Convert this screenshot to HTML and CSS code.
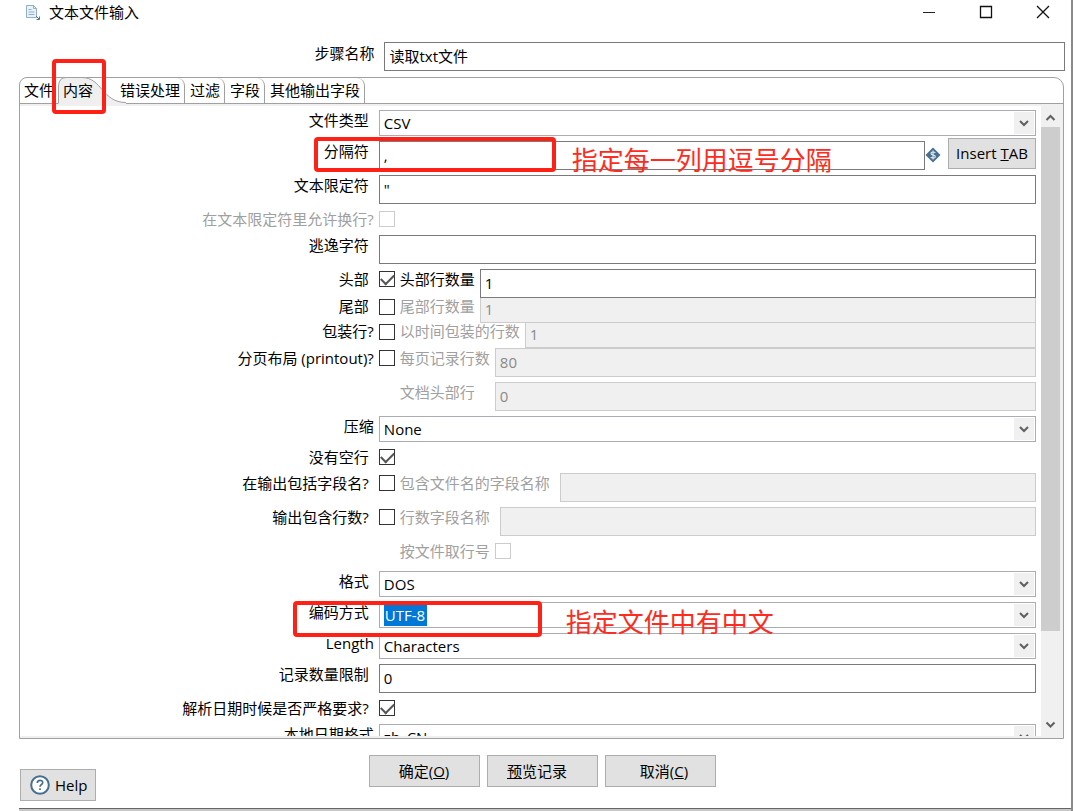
FILE: index.html
```html
<!DOCTYPE html>
<html lang="zh-CN">
    <head>
        <meta charset="utf-8"/>
        <title>文本文件输入</title>
        <link rel="stylesheet" href="styles.css">
    </head>

    <body>
        <div class="dialog">
            <header class="titlebar">
                <svg class="title-icon" width="16" height="17" viewBox="0 0 16 17" fill="none">
                    <path d="M1.500 1.500h7l3 3v9h-10z" fill="#eaf2f8" stroke="#8fb0c8"/>
                    <path d="M8.500 1.500v3h3M3.500 5.500h3M3.500 8h6M3.500 10.500h6" stroke="#8fb0c8"/>
                    <path d="M11 12l3 3M14.500 12.500v3h-3" stroke="#4a7595"/>
                </svg>
                <h1>文本文件输入</h1>
                <button class="win-btn" aria-label="最小化"><svg width="14" height="14" viewBox="0 0 14 14"><path d="M1 7.500h12" stroke="#222" fill="none"/></svg></button>
                <button class="win-btn" aria-label="最大化"><svg width="14" height="14" viewBox="0 0 14 14"><path d="M1.500 1.500h11v11h-11z" stroke="#111" stroke-width="1.300" fill="none"/></svg></button>
                <button class="win-btn" aria-label="关闭"><svg width="14" height="14" viewBox="0 0 14 14"><path d="M1 1l12 12M13 1L1 13" stroke="#111" stroke-width="1.300" fill="none"/></svg></button>
            </header>

            <div class="step">
                <label for="stepName">步骤名称</label>
                <input type="text" id="stepName" class="text" value="读取txt文件">
            </div>

            <main class="panel">
                <nav class="tabs">
                    <button class="tab tab-first">文件</button>
                    <button class="tab tab-active">
                        <svg width="68" height="27" viewBox="0 0 68 27"><path d="M.5 27V9Q1 .5 8 .5H24C44 .5 44 25.500 68 25.500V27z" fill="#efefef"/><path d="M.5 26V9Q1 .5 8 .5H24C44 .5 44 25.500 68 25.500" fill="none" stroke="#a0a0a0"/></svg>
                        <span>内容</span>
                        <i class="mark mark-tab"></i>
                    </button>
                    <button class="tab">错误处理</button>
                    <button class="tab">过滤</button>
                    <button class="tab">字段</button>
                    <button class="tab">其他输出字段</button>
                </nav>

                <div class="content">
                    <form class="form">
                        <div class="row">
                            <label class="name" for="fileType">文件类型</label>
                            <div class="field">
                                <div class="combo"><select id="fileType"><option>CSV</option></select><svg class="arrow" viewBox="0 0 20 22"><path d="M6 9l4 4 4-4" /></svg></div>
                            </div>
                        </div>
                        <div class="row">
                            <label class="name" for="separator">分隔符</label>
                            <div class="field">
                                <input type="text" id="separator" class="text" value=",">
                                <svg class="var-icon" width="16" height="16" viewBox="0 0 16 16"><path d="M8 0.500L15.500 8 8 15.500.5 8z" fill="#47708f"/><path d="M10.300 5.800C9.500 4.700 6 4.600 6 6.500c0 1.800 4.300 1.100 4.300 3.100 0 1.900-3.600 1.900-4.600.6M8 3.500v9" fill="none" stroke="#dce8f0" stroke-width="1.200"/></svg>
                                <button type="button" class="btn btn-tab">Insert <u>T</u>AB</button>
                                <i class="mark mark-sep"></i>
                                <span class="note note-sep">指定每一列用逗号分隔</span>
                            </div>
                        </div>
                        <div class="row">
                            <label class="name" for="enclosure">文本限定符</label>
                            <div class="field"><input type="text" id="enclosure" class="text" value="&quot;"></div>
                        </div>
                        <div class="row row-check">
                            <label class="name wide off" for="breaks">在文本限定符里允许换行?</label>
                            <div class="field"><input type="checkbox" id="breaks" disabled></div>
                        </div>
                        <div class="row">
                            <label class="name" for="escape">逃逸字符</label>
                            <div class="field"><input type="text" id="escape" class="text"></div>
                        </div>

                        <div class="group">
                            <div class="row">
                                <label class="name" for="header">头部</label>
                                <div class="field">
                                    <input type="checkbox" id="header" checked>
                                    <label class="sub" for="headerNum">头部行数量</label>
                                    <input type="text" id="headerNum" class="text" value="1">
                                </div>
                            </div>
                            <div class="row row-tight">
                                <label class="name" for="footer">尾部</label>
                                <div class="field">
                                    <input type="checkbox" id="footer">
                                    <label class="sub off" for="footerNum">尾部行数量</label>
                                    <input type="text" id="footerNum" class="text" value="1" disabled>
                                </div>
                            </div>
                            <div class="row row-tight">
                                <label class="name wide" for="wrap">包装行?</label>
                                <div class="field">
                                    <input type="checkbox" id="wrap">
                                    <label class="sub off" for="wrapNum">以时间包装的行数</label>
                                    <input type="text" id="wrapNum" class="text" value="1" disabled>
                                </div>
                            </div>
                            <div class="row">
                                <label class="name wide" for="paged">分页布局 (printout)?</label>
                                <div class="field">
                                    <input type="checkbox" id="paged">
                                    <label class="sub off" for="pageNum">每页记录行数</label>
                                    <input type="text" id="pageNum" class="text" value="80" disabled>
                                </div>
                            </div>
                        </div>

                        <div class="row">
                            <span class="name"></span>
                            <div class="field">
                                <label class="sub sub-doc off" for="docHeader">文档头部行</label>
                                <input type="text" id="docHeader" class="text" value="0" disabled>
                            </div>
                        </div>
                        <div class="row">
                            <label class="name wide" for="zip">压缩</label>
                            <div class="field">
                                <div class="combo"><select id="zip"><option>None</option></select><svg class="arrow" viewBox="0 0 20 22"><path d="M6 9l4 4 4-4" /></svg></div>
                            </div>
                        </div>
                        <div class="row row-check">
                            <label class="name" for="noEmpty">没有空行</label>
                            <div class="field"><input type="checkbox" id="noEmpty" checked></div>
                        </div>
                        <div class="row">
                            <label class="name" for="inclName">在输出包括字段名?</label>
                            <div class="field">
                                <input type="checkbox" id="inclName">
                                <label class="sub sub-far off" for="nameField">包含文件名的字段名称</label>
                                <input type="text" id="nameField" class="text" disabled>
                            </div>
                        </div>
                        <div class="row">
                            <label class="name" for="inclRow">输出包含行数?</label>
                            <div class="field">
                                <input type="checkbox" id="inclRow">
                                <label class="sub sub-far off" for="rowField">行数字段名称</label>
                                <input type="text" id="rowField" class="text" disabled>
                            </div>
                        </div>
                        <div class="row row-check row-last">
                            <span class="name"></span>
                            <div class="field">
                                <label class="sub sub-line off" for="byFile">按文件取行号</label>
                                <input type="checkbox" id="byFile" disabled>
                            </div>
                        </div>
                        <div class="row">
                            <label class="name" for="format">格式</label>
                            <div class="field">
                                <div class="combo"><select id="format"><option>DOS</option></select><svg class="arrow" viewBox="0 0 20 22"><path d="M6 9l4 4 4-4" /></svg></div>
                            </div>
                        </div>
                        <div class="row">
                            <label class="name" for="encoding">编码方式</label>
                            <div class="field">
                                <div class="combo combo-selected"><select id="encoding"><option>UTF-8</option></select><svg class="arrow" viewBox="0 0 20 22"><path d="M6 9l4 4 4-4" /></svg></div>
                                <i class="mark mark-enc"></i>
                                <span class="note note-enc">指定文件中有中文</span>
                            </div>
                        </div>
                        <div class="row">
                            <label class="name wide" for="length">Length</label>
                            <div class="field">
                                <div class="combo"><select id="length"><option>Characters</option></select><svg class="arrow" viewBox="0 0 20 22"><path d="M6 9l4 4 4-4" /></svg></div>
                            </div>
                        </div>
                        <div class="row">
                            <label class="name" for="limit">记录数量限制</label>
                            <div class="field"><input type="text" id="limit" class="text" value="0"></div>
                        </div>
                        <div class="row row-check">
                            <label class="name" for="lenient">解析日期时候是否严格要求?</label>
                            <div class="field"><input type="checkbox" id="lenient" checked></div>
                        </div>
                        <div class="row">
                            <label class="name wide" for="locale">本地日期格式</label>
                            <div class="field">
                                <div class="combo"><select id="locale"><option>zh_CN</option></select><svg class="arrow" viewBox="0 0 20 22"><path d="M6 9l4 4 4-4" /></svg></div>
                            </div>
                        </div>
                    </form>

                    <div class="scrollbar">
                        <svg class="scroll-arrow" viewBox="0 0 19 21"><path d="M5.500 14l4-4 4 4"/></svg>
                        <div class="thumb"></div>
                        <div class="track"></div>
                        <svg class="scroll-arrow" viewBox="0 0 19 21"><path d="M5.500 7.500l4 4 4-4"/></svg>
                    </div>
                </div>
            </main>

            <footer class="buttons">
                <button class="btn btn-help">
                    <svg width="20" height="20" viewBox="0 0 20 20" fill="none"><circle cx="10" cy="10" r="8.800" fill="#fff" stroke="#47708f" stroke-width="2"/><path d="M7.300 8C7.300 4.400 12.800 4.500 12.700 7.700 12.600 9.500 10 9.500 10 11.700M10 13.200v1.800" stroke="#47708f" stroke-width="1.700"/></svg>
                    Help
                </button>
                <div class="actions">
                    <button class="btn">确定(<u>O</u>)</button>
                    <button class="btn btn-preview"><u>预</u>览记录</button>
                    <button class="btn btn-cancel">取消(<u>C</u>)</button>
                </div>
            </footer>
            <div class="bottom-edge"></div>
        </div>
    </body>
</html>
```
FILE: styles.css
```css
* { box-sizing: border-box; }
body {
    margin: 0; background: #fff; color: #000;
    font: 15px/22px "Open Sans", "Noto Sans CJK SC", sans-serif;
}
button, input, select { font: inherit; color: inherit; margin: 0; }
button { padding: 0; border: 0; background: none; }

.dialog {
    display: flex; flex-direction: column;
    height: 100vh; border-right: 2px solid #8a8a8a;
}

/* 标题栏 */
.titlebar { display: flex; align-items: center; height: 24px; padding-left: 25px; }
.titlebar h1 { flex: 1; margin: 0 0 0 8px; font-size: 15px; font-weight: normal; }
.win-btn { display: flex; align-items: center; justify-content: center; width: 57px; height: 24px; }

.step { display: flex; margin: 18px 6px 6px 18px; }
.step label { width: 35%; padding-right: 10px; text-align: right; }

.text {
    flex: 1; min-width: 0; height: 29px; padding: 0 4px 2px;
    border: 1px solid #7a7a7a; border-radius: 0; background: #fff;
}
.text:disabled { border-color: #ccc; background: #f0f0f0; color: #8a8a8a; }

/* 选项卡 */
.panel {
    flex: 1; min-height: 0; margin: 0 7px 0 19px;
    display: flex; flex-direction: column;
    border: 1px solid #a0a0a0; border-radius: 8px 10px 0 0;
}
.tabs { display: flex; height: 26px; border-bottom: 1px solid #a0a0a0; }
.tab {
    padding: 0 4px 0 5px; height: 25px; line-height: 25px;
    border-right: 1px solid #a0a0a0; border-top-right-radius: 8px;
}
.tab-first { padding-left: 4px; border-right: 0; }
.tab-active { position: relative; width: 57px; padding: 0; border: 0; text-align: left; }
.tab-active svg { position: absolute; left: 0; top: -1px; }
.tab-active span { position: relative; padding-left: 5px; }

.content { flex: 1; min-height: 0; display: flex; padding: 2px 3px 2px 0; background: #f0f0f0; }
.form {
    flex: 1; overflow: hidden; padding: 4px 5px 0; background: #fff;
    display: flex; flex-direction: column; gap: 5px;
}
.row { display: flex; flex-shrink: 0; }
.name { width: 35%; flex-shrink: 0; padding-right: 10px; line-height: 20px; text-align: right; white-space: nowrap; }
.wide { padding-right: 5px; }
.off { color: #a0a0a0; }
.field { position: relative; flex: 1; min-width: 0; display: flex; align-items: flex-start; }
.sub { padding: 0 5px; line-height: 20px; white-space: nowrap; }
.sub-far { padding-right: 10px; }
.sub-doc { padding-left: 21px; padding-right: 20px; }
.sub-line { padding-left: 21px; }
.row-check { min-height: 21px; }
.row-last { margin-bottom: 4px; }
.row-tight .name, .row-tight .sub { line-height: 17px; }
.row-tight .text { height: 25px; border-top: 0; }
.row-tight input[type=checkbox] { margin-top: 1px; }

input[type=checkbox] {
    appearance: none; width: 16px; height: 16px; margin-top: 2px; flex-shrink: 0;
    border: 1px solid #333; background: #fff;
}
input[type=checkbox]:disabled { border-color: #ccc; }
input[type=checkbox]:checked::after {
    content: ""; display: block; width: 11px; height: 6px; margin: 2px 0 0 1px;
    border-left: 2px solid #555; border-bottom: 2px solid #555;
    transform: rotate(-45deg);
}

.combo { flex: 1; display: flex; height: 26px; padding: 1px; border: 1px solid #acacb4; background: #fff; }
.combo select { flex: 1; padding: 0 3px; border: 0; border-radius: 0; appearance: none; background: #fff; }
.combo-selected { justify-content: space-between; padding-left: 4px; }
.combo-selected select { flex: none; height: 22px; padding: 0 1px; background: #0078d7; color: #fff; }
.arrow { width: 20px; height: 22px; background: #f0f0f0; }
.arrow path, .scroll-arrow path { fill: none; stroke: #606060; stroke-width: 2; }
.var-icon { margin-top: 6px; }

.btn { border: 1px solid #adadad; background: #e1e1e1; height: 32px; }
.btn-tab { width: 88px; height: 31px; margin: -3px 0 0 7px; padding-bottom: 2px; }

.scrollbar { display: flex; flex-direction: column; width: 19px; }
.scroll-arrow { width: 19px; height: 21px; }
.thumb { flex: 6; background: #cdcdcd; }
.track { flex: 1; }

/* 底部按钮 */
.buttons { position: relative; display: flex; justify-content: center; padding: 16px 6px 21px 19px; }
.actions { display: flex; gap: 7px; }
.actions .btn { width: 111px; }
.actions .btn-preview { padding-right: 10px; }
.actions .btn-cancel { padding-left: 8px; }
.btn-help {
    position: absolute; left: 20px; bottom: 7px;
    display: flex; align-items: center; gap: 5px; padding: 0 8px 0 9px;
}
.bottom-edge { height: 3px; margin-left: 19px; border-top: 1px solid #666; background: #c8c8c8; }

/* 红色标注 */
.mark { position: absolute; border: 4px solid #ff2116; border-radius: 4px; z-index: 2; }
.mark-tab { left: -6px; top: -19px; width: 54px; height: 55px; }
.mark-sep { left: -65px; top: -4px; width: 242px; height: 35px; }
.mark-enc { left: -86px; top: -1px; width: 249px; height: 36px; }
.note { position: absolute; z-index: 2; font-size: 26px; line-height: 30px; color: #ff2b20; white-space: nowrap; }
.note-sep { left: 193px; top: 4px; }
.note-enc { left: 187px; top: 5px; }
```
